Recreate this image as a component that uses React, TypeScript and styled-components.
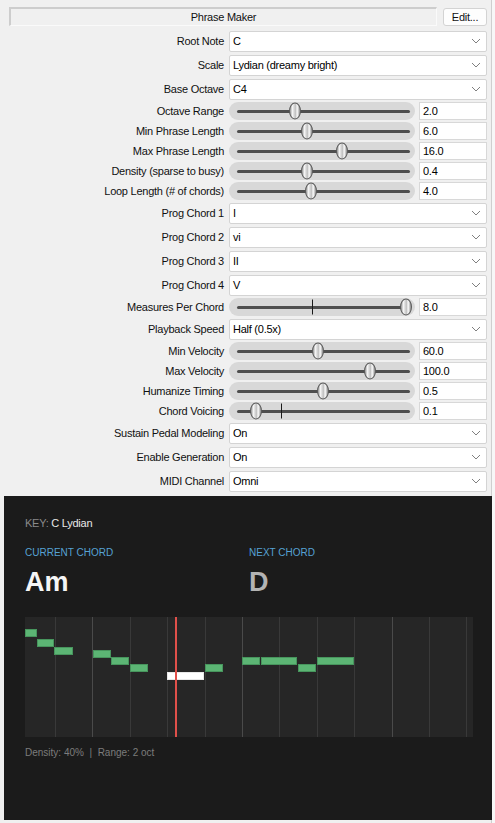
import React from 'react';
import styled, { createGlobalStyle } from 'styled-components';

const GlobalStyle = createGlobalStyle`
  html, body {
    margin: 0;
    padding: 0;
    background: #f7f7f7;
  }
  body {
    font-family: "Liberation Sans", Arial, sans-serif;
  }
`;

const Window = styled.div`
  width: 492px;
  height: 823px;
  box-sizing: border-box;
  border-right: 1px solid #cfcfcf;
  background: #f0f0f0;
  padding-top: 7px;
  display: flex;
  flex-direction: column;
`;

const Form = styled.div`
  padding: 0 4px 0 9px;
  display: flex;
  flex-direction: column;
  letter-spacing: -0.25px;
`;

const Header = styled.div`
  display: flex;
  gap: 6px;
  height: 19px;
  margin-bottom: 3px;
`;

const TitleBar = styled.div`
  flex: 1;
  box-sizing: border-box;
  border-top: 2px solid #cdcdcd;
  border-left: 2px solid #cdcdcd;
  border-bottom: 1px solid #fafafa;
  border-right: 1px solid #fafafa;
  display: flex;
  align-items: center;
  justify-content: center;
  font-size: 11px;
  color: #111;
`;

const EditButton = styled.button`
  width: 44px;
  height: 18px;
  margin-top: 1px;
  box-sizing: border-box;
  background: #fdfdfd;
  border: 1px solid #d3d3d3;
  border-radius: 3px;
  font-family: inherit;
  font-size: 11px;
  letter-spacing: -0.25px;
  color: #111;
  padding: 0;
`;

const Row = styled.div<{ $kind: 'select' | 'slider' }>`
  display: grid;
  grid-template-columns: 215px 1fr;
  column-gap: 5px;
  align-items: center;
  height: ${p => (p.$kind === 'select' ? 24 : 20)}px;
`;

const Label = styled.div`
  text-align: right;
  font-size: 11px;
  color: #111;
  white-space: nowrap;
`;

const SelectBox = styled.div`
  height: 21px;
  box-sizing: border-box;
  background: #fff;
  border: 1px solid #d4d4d4;
  border-radius: 2px;
  display: flex;
  align-items: center;
  justify-content: space-between;
  padding: 0 5px 0 3px;
  font-size: 11px;
  color: #000;
`;

const SliderWrap = styled.div`
  display: flex;
  gap: 4px;
  align-items: center;
`;

const Track = styled.div`
  width: 186px;
  height: 18px;
  border-radius: 9px;
  background: #d8d8d8;
  display: flex;
  align-items: center;
  padding: 0 5px 0 8px;
  box-sizing: border-box;
`;

const Rail = styled.div`
  flex: 1;
  height: 3px;
  border-radius: 2px;
  background: #4e4e4e;
  position: relative;
`;

const Thumb = styled.div`
  position: absolute;
  top: 50%;
  width: 12px;
  height: 17px;
  transform: translate(-50%, -50%);
  box-sizing: border-box;
  border: 1px solid #5a5a5a;
  border-radius: 50%;
  background: linear-gradient(
    to right,
    #9a9a9a 0%,
    #f4f4f4 25%,
    #d0d0d0 45%,
    #5e5e5e 50%,
    #d8d8d8 56%,
    #f0f0f0 75%,
    #8e8e8e 100%
  );
`;

const Tick = styled.div`
  position: absolute;
  top: 50%;
  width: 1px;
  height: 15px;
  transform: translateY(-50%);
  background: #1a1a1a;
`;

const ValueBox = styled.div`
  flex: 1;
  height: 18px;
  box-sizing: border-box;
  background: #fff;
  border: 1px solid #d8d8d8;
  display: flex;
  align-items: center;
  padding-left: 3px;
  font-size: 11px;
  color: #000;
`;

const Panel = styled.div`
  margin: 3px 0 0 4px;
  width: 488px;
  height: 324px;
  background: #1b1b1b;
  box-sizing: border-box;
  padding: 20px 19px 0 21px;
  display: flex;
  flex-direction: column;
`;

const KeyLine = styled.div`
  font-size: 11px;
  line-height: 14px;
  letter-spacing: -0.25px;
  color: #e8e8e8;
`;

const KeyTag = styled.span`
  color: #8a8a8a;
`;

const ChordRow = styled.div`
  display: grid;
  grid-template-columns: 224px 1fr;
  margin-top: 16px;
`;

const ChordLabel = styled.div`
  font-size: 10px;
  line-height: 14px;
  color: #56a2d4;
`;

const ChordName = styled.div<{ $dim?: boolean }>`
  margin-top: 7px;
  font-size: 27px;
  line-height: 30px;
  font-weight: bold;
  color: ${p => (p.$dim ? '#b3b3b3' : '#f5f5f5')};
`;

const Roll = styled.div`
  position: relative;
  margin-top: 20px;
  width: 448px;
  height: 120px;
  background: #262626;
  overflow: hidden;
`;

const GridLine = styled.div<{ $strong?: boolean }>`
  position: absolute;
  top: 0;
  bottom: 0;
  width: 1px;
  background: ${p => (p.$strong ? '#4a4a4a' : '#393939')};
`;

const Note = styled.div<{ $active?: boolean }>`
  position: absolute;
  height: 8px;
  box-sizing: border-box;
  background: ${p => (p.$active ? '#ffffff' : '#5cb574')};
  border: 1px solid ${p => (p.$active ? '#e8e8e8' : '#47955d')};
`;

const Playhead = styled.div`
  position: absolute;
  top: 0;
  bottom: 0;
  width: 2px;
  background: #e0504a;
`;

const Footer = styled.div`
  margin-top: 10px;
  font-size: 10px;
  line-height: 12px;
  color: #7c7c7c;
  white-space: pre;
`;

const Chevron = () => (
  <svg width="10" height="6" viewBox="0 0 10 6">
    <path d="M1 1 L5 5 L9 1" fill="none" stroke="#808080" strokeWidth="1" />
  </svg>
);

type Field =
  | { kind: 'select'; label: string; value: string }
  | { kind: 'slider'; label: string; value: string; pct: number; tick?: number };

const fields: Field[] = [
  { kind: 'select', label: 'Root Note', value: 'C' },
  { kind: 'select', label: 'Scale', value: 'Lydian (dreamy bright)' },
  { kind: 'select', label: 'Base Octave', value: 'C4' },
  { kind: 'slider', label: 'Octave Range', value: '2.0', pct: 33.5 },
  { kind: 'slider', label: 'Min Phrase Length', value: '6.0', pct: 40.5 },
  { kind: 'slider', label: 'Max Phrase Length', value: '16.0', pct: 60.7 },
  { kind: 'slider', label: 'Density (sparse to busy)', value: '0.4', pct: 40.5 },
  { kind: 'slider', label: 'Loop Length (# of chords)', value: '4.0', pct: 42.8 },
  { kind: 'select', label: 'Prog Chord 1', value: 'I' },
  { kind: 'select', label: 'Prog Chord 2', value: 'vi' },
  { kind: 'select', label: 'Prog Chord 3', value: 'II' },
  { kind: 'select', label: 'Prog Chord 4', value: 'V' },
  { kind: 'slider', label: 'Measures Per Chord', value: '8.0', pct: 97.7, tick: 43.4 },
  { kind: 'select', label: 'Playback Speed', value: 'Half (0.5x)' },
  { kind: 'slider', label: 'Min Velocity', value: '60.0', pct: 46.8 },
  { kind: 'slider', label: 'Max Velocity', value: '100.0', pct: 76.9 },
  { kind: 'slider', label: 'Humanize Timing', value: '0.5', pct: 49.7 },
  { kind: 'slider', label: 'Chord Voicing', value: '0.1', pct: 11, tick: 25.4 },
  { kind: 'select', label: 'Sustain Pedal Modeling', value: 'On' },
  { kind: 'select', label: 'Enable Generation', value: 'On' },
  { kind: 'select', label: 'MIDI Channel', value: 'Omni' },
];

// x, width, top inside the roll (px)
const notes = [
  { x: 0, w: 12, y: 12 },
  { x: 12, w: 17, y: 22 },
  { x: 29, w: 19, y: 30 },
  { x: 68, w: 18, y: 33 },
  { x: 86, w: 18, y: 40 },
  { x: 105, w: 18, y: 47 },
  { x: 142, w: 37, y: 55, active: true },
  { x: 180, w: 18, y: 47 },
  { x: 217, w: 18, y: 40 },
  { x: 236, w: 36, y: 40 },
  { x: 273, w: 18, y: 47 },
  { x: 292, w: 37, y: 40 },
];

const gridLines = Array.from({ length: 12 }, (_, k) => ({
  x: Math.round(30 + 37.4 * k),
  strong: k % 4 === 1,
}));

const App: React.FC = () => {
  return (
    <>
      <GlobalStyle />
      <Window>
        <Form>
          <Header>
            <TitleBar>Phrase Maker</TitleBar>
            <EditButton>Edit...</EditButton>
          </Header>
          {fields.map(f => (
            <Row key={f.label} $kind={f.kind}>
              <Label>{f.label}</Label>
              {f.kind === 'select' ? (
                <SelectBox>
                  <span>{f.value}</span>
                  <Chevron />
                </SelectBox>
              ) : (
                <SliderWrap>
                  <Track>
                    <Rail>
                      {f.tick !== undefined && <Tick style={{ left: `${f.tick}%` }} />}
                      <Thumb style={{ left: `${f.pct}%` }} />
                    </Rail>
                  </Track>
                  <ValueBox>{f.value}</ValueBox>
                </SliderWrap>
              )}
            </Row>
          ))}
        </Form>

        <Panel>
          <KeyLine>
            <KeyTag>KEY:</KeyTag> C Lydian
          </KeyLine>
          <ChordRow>
            <div>
              <ChordLabel>CURRENT CHORD</ChordLabel>
              <ChordName>Am</ChordName>
            </div>
            <div>
              <ChordLabel>NEXT CHORD</ChordLabel>
              <ChordName $dim>D</ChordName>
            </div>
          </ChordRow>
          <Roll>
            {gridLines.map(g => (
              <GridLine key={g.x} $strong={g.strong} style={{ left: g.x }} />
            ))}
            {notes.map((n, i) => (
              <Note key={i} $active={n.active} style={{ left: n.x, top: n.y, width: n.w }} />
            ))}
            <Playhead style={{ left: 150 }} />
          </Roll>
          <Footer>Density: 40%  |  Range: 2 oct</Footer>
        </Panel>
      </Window>
    </>
  );
};

export default App;
